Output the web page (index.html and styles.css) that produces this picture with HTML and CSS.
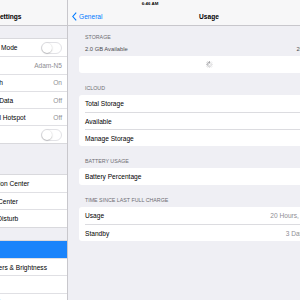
FILE: index.html
```html
<!DOCTYPE html>
<html lang="en">
<head>
    <meta charset="UTF-8">
    <meta name="viewport" content="width=device-width, initial-scale=1.0">
    <title>Settings - Usage</title>
    <link rel="stylesheet" href="styles.css">
</head>
<body>
    <div class="screen">
        <div class="status">6:46 AM</div>

        <aside class="sidebar">
            <header class="side-head">Settings</header>

            <ul class="group">
                <li class="side-row"><span>Airplane Mode</span><span class="switch"><span class="knob"></span></span></li>
                <li class="side-row"><span>Wi-Fi</span><span class="value">Adam-N5</span></li>
                <li class="side-row"><span>Bluetooth</span><span class="value">On</span></li>
                <li class="side-row"><span>Cellular Data</span><span class="value">Off</span></li>
                <li class="side-row"><span>Personal Hotspot</span><span class="value">Off</span></li>
                <li class="side-row"><span>VPN</span><span class="switch"><span class="knob"></span></span></li>
            </ul>

            <ul class="group group-wide">
                <li class="side-row"><span>Notification Center</span></li>
                <li class="side-row"><span>Control Center</span></li>
                <li class="side-row"><span>Do Not Disturb</span></li>
            </ul>

            <ul class="group">
                <li class="side-row selected"><span>General</span></li>
                <li class="side-row"><span>Wallpapers &amp; Brightness</span></li>
                <li class="side-row"><span>Sounds</span></li>
                <li class="side-row"><span>Passcode</span></li>
            </ul>
        </aside>

        <main class="detail">
            <header class="nav">
                <a class="back">
                    <svg width="5" height="9" viewBox="0 0 5 9"><polyline points="4.2,0.6 0.8,4.5 4.2,8.4" fill="none" stroke="#007aff" stroke-width="1.1"/></svg>
                    General
                </a>
                <h1>Usage</h1>
                <span></span>
            </header>

            <div class="content">
                <div class="section-head storage-head">
                    <div>Storage</div>
                    <div class="storage-info"><span>2.0 GB Available</span><span>26.8 GB Used</span></div>
                </div>
                <div class="card">
                    <div class="cell cell-center">
                        <svg class="spinner" width="7" height="7" viewBox="-10 -10 20 20">
                            <line x1="0" y1="-4.5" x2="0" y2="-8.5" stroke-opacity="1" transform="rotate(0)"/>
                            <line x1="0" y1="-4.5" x2="0" y2="-8.5" stroke-opacity="0.9" transform="rotate(-30)"/>
                            <line x1="0" y1="-4.5" x2="0" y2="-8.5" stroke-opacity="0.8" transform="rotate(-60)"/>
                            <line x1="0" y1="-4.5" x2="0" y2="-8.5" stroke-opacity="0.7" transform="rotate(-90)"/>
                            <line x1="0" y1="-4.5" x2="0" y2="-8.5" stroke-opacity="0.6" transform="rotate(-120)"/>
                            <line x1="0" y1="-4.5" x2="0" y2="-8.5" stroke-opacity="0.5" transform="rotate(-150)"/>
                            <line x1="0" y1="-4.5" x2="0" y2="-8.5" stroke-opacity="0.4" transform="rotate(-180)"/>
                            <line x1="0" y1="-4.5" x2="0" y2="-8.5" stroke-opacity="0.35" transform="rotate(-210)"/>
                            <line x1="0" y1="-4.5" x2="0" y2="-8.5" stroke-opacity="0.3" transform="rotate(-240)"/>
                            <line x1="0" y1="-4.5" x2="0" y2="-8.5" stroke-opacity="0.3" transform="rotate(-270)"/>
                            <line x1="0" y1="-4.5" x2="0" y2="-8.5" stroke-opacity="0.3" transform="rotate(-300)"/>
                            <line x1="0" y1="-4.5" x2="0" y2="-8.5" stroke-opacity="0.3" transform="rotate(-330)"/>
                        </svg>
                    </div>
                </div>

                <div class="section-head">iCloud</div>
                <div class="card">
                    <div class="cell"><span>Total Storage</span></div>
                    <div class="cell"><span>Available</span></div>
                    <div class="cell"><span>Manage Storage</span></div>
                </div>

                <div class="section-head">Battery Usage</div>
                <div class="card">
                    <div class="cell"><span>Battery Percentage</span></div>
                </div>

                <div class="section-head">Time since last full charge</div>
                <div class="card">
                    <div class="cell"><span>Usage</span><span class="cell-value">20 Hours, 15 Minutes</span></div>
                    <div class="cell"><span>Standby</span><span class="cell-value">3 Days, 2 Hours</span></div>
                </div>
            </div>
        </main>
    </div>
</body>
</html>
```

FILE: styles.css
```css
* {
    margin: 0;
    padding: 0;
    box-sizing: border-box;
}

html, body {
    width: 300px;
    height: 300px;
    overflow: hidden;
}

body {
    font-family: 'Liberation Sans', Arial, sans-serif;
    font-size: 6.6px;
    background: #efeff4;
    color: #000;
}

/* whole iPad screen, cropped on both sides */
.screen {
    display: flex;
    width: 400px;
    height: 300px;
    margin-left: -50px;
    position: relative;
}

.status {
    position: absolute;
    top: 0;
    left: 0;
    right: 0;
    height: 8px;
    line-height: 8px;
    text-align: center;
    font-size: 4.4px;
    font-weight: bold;
}

/* Sidebar */
.sidebar {
    width: 118px;
    flex-shrink: 0;
    border-right: 1px solid #c8c7cc;
    background: #efeff4;
}

.side-head {
    height: 26px;
    padding-top: 8px;
    background: #f7f7f8;
    border-bottom: 1px solid #c8c7cc;
    display: flex;
    align-items: center;
    justify-content: center;
    font-weight: bold;
}

.group {
    list-style: none;
    background: #fff;
    margin-top: 12px;
    border-top: 1px solid #d9d9dd;
    border-bottom: 1px solid #d9d9dd;
}

.group-wide {
    margin-top: 30px;
}

.side-row {
    height: 17.3px;
    display: flex;
    align-items: center;
    justify-content: space-between;
    padding: 0 5px 0 25px;
    white-space: nowrap;
}

.side-row + .side-row {
    border-top: 1px solid #e0e0e4;
}

.side-row.selected {
    background: #1a84fb;
    color: #fff;
}

.value {
    color: #8e8e93;
}

.switch {
    width: 21px;
    height: 12px;
    border-radius: 6px;
    border: 1px solid #e2e2e6;
    background: #fff;
    display: flex;
    align-items: center;
}

.knob {
    width: 10px;
    height: 10px;
    border-radius: 50%;
    background: #fff;
    box-shadow: 0 0.5px 1.5px rgba(0, 0, 0, 0.35);
}

/* Detail pane */
.detail {
    flex: 1;
    display: flex;
    flex-direction: column;
}

.nav {
    height: 26px;
    padding-top: 8px;
    background: #f7f7f8;
    border-bottom: 1px solid #c8c7cc;
    display: grid;
    grid-template-columns: 1fr auto 1fr;
    align-items: center;
}

.back {
    display: flex;
    align-items: center;
    gap: 2px;
    padding-left: 4px;
    color: #007aff;
}

.nav h1 {
    font-size: 6.6px;
    font-weight: bold;
}

.content {
    padding: 0 11px;
}

.section-head {
    height: 22px;
    padding: 12px 6px 3px;
    line-height: 7px;
    font-size: 5.3px;
    color: #6d6d72;
    text-transform: uppercase;
}

.storage-head {
    height: 30px;
    padding-top: 8px;
}

.storage-info {
    display: flex;
    justify-content: space-between;
    margin-top: 4px;
    line-height: 8px;
    font-size: 5.8px;
    color: #4d4d52;
    text-transform: none;
}

.card {
    background: #fff;
    border-radius: 3px;
    overflow: hidden;
}

.cell {
    height: 17px;
    margin-left: 6px;
    padding-right: 6px;
    display: flex;
    align-items: center;
    justify-content: space-between;
    white-space: nowrap;
}

.cell + .cell {
    border-top: 1px solid #dcdce0;
}

.cell-center {
    margin-left: 0;
    padding: 0;
    justify-content: center;
}

.cell-value {
    color: #8e8e93;
}

.spinner line {
    stroke: #8e8e93;
    stroke-width: 2.2;
    stroke-linecap: round;
}
```
